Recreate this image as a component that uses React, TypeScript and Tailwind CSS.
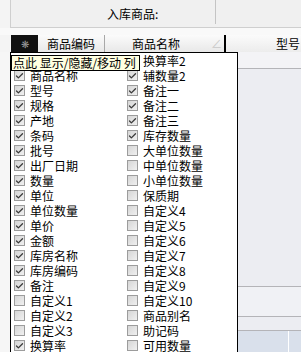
import { Check } from "lucide-react";

type Item = { label: string; checked: boolean };

const leftItems: Item[] = [
  { label: "商品编码", checked: true },
  { label: "商品名称", checked: true },
  { label: "型号", checked: true },
  { label: "规格", checked: true },
  { label: "产地", checked: true },
  { label: "条码", checked: true },
  { label: "批号", checked: true },
  { label: "出厂日期", checked: true },
  { label: "数量", checked: true },
  { label: "单位", checked: true },
  { label: "单位数量", checked: true },
  { label: "单价", checked: true },
  { label: "金额", checked: true },
  { label: "库房名称", checked: true },
  { label: "库房编码", checked: true },
  { label: "备注", checked: true },
  { label: "自定义1", checked: false },
  { label: "自定义2", checked: false },
  { label: "自定义3", checked: false },
  { label: "换算率", checked: true },
];

const rightItems: Item[] = [
  { label: "换算率2", checked: true },
  { label: "辅数量2", checked: true },
  { label: "备注一", checked: true },
  { label: "备注二", checked: true },
  { label: "备注三", checked: true },
  { label: "库存数量", checked: true },
  { label: "大单位数量", checked: false },
  { label: "中单位数量", checked: false },
  { label: "小单位数量", checked: false },
  { label: "保质期", checked: false },
  { label: "自定义4", checked: false },
  { label: "自定义5", checked: false },
  { label: "自定义6", checked: false },
  { label: "自定义7", checked: false },
  { label: "自定义8", checked: false },
  { label: "自定义9", checked: false },
  { label: "自定义10", checked: false },
  { label: "商品别名", checked: false },
  { label: "助记码", checked: false },
  { label: "可用数量", checked: false },
];

function Box({ checked }: { checked: boolean }) {
  return (
    <span className="w-[11px] h-[11px] shrink-0 border border-[#9c9c9c] bg-gradient-to-br from-[#d6d6d6] to-[#f0f0f0] flex items-center justify-center">
      {checked && <Check size={10} strokeWidth={3.5} className="text-[#3a3a3a]" />}
    </span>
  );
}

function Row({ item }: { item: Item }) {
  return (
    <div className="h-[15px] flex items-center gap-[5px] pl-[3px] whitespace-nowrap">
      <Box checked={item.checked} />
      <span className="leading-[15px]">{item.label}</span>
    </div>
  );
}

export default function App() {
  return (
    <div
      className="w-[301px] h-[352px] overflow-hidden bg-[#f4f4f4] text-[12px] text-black flex flex-col"
      style={{ fontFamily: '"Noto Sans CJK SC", "Noto Sans", sans-serif' }}
    >
      {/* form strip */}
      <div className="h-[28px] ml-[10px] border-l border-b border-[#cfcfcf] bg-[#f0f0f0] flex items-start">
        <span className="ml-[96px] mt-[6px] leading-[15px]">入库商品:</span>
        <span className="ml-[57px] w-px h-[24px] bg-[#c4c4c4]" />
      </div>
      <div className="h-[7px] bg-[#f9f9f9]" />

      {/* grid header */}
      <div className="h-[17px] flex">
        <div className="w-[11px] bg-[#f4f4f4]" />
        <div className="w-[27px] bg-[#111] text-[#9a9a9a] text-[10px] flex items-center justify-center">❋</div>
        <div className="w-[67px] border-r border-[#a8a8a8] bg-gradient-to-b from-[#fbfbfb] to-[#e8e8e8] flex items-center justify-center">
          商品编码
        </div>
        <div className="w-[119px] bg-gradient-to-b from-[#fbfbfb] to-[#e8e8e8] flex items-center pl-[27px]">
          <span>商品名称</span>
          <span className="ml-[31px] text-[#c8c8c8] text-[11px]">∠</span>
        </div>
        <div className="w-[2px] bg-black" />
        <div className="flex-1 bg-gradient-to-b from-[#fbfbfb] to-[#ececec] flex items-center justify-end pr-[1px]">
          型号
        </div>
      </div>

      {/* body */}
      <div className="flex-1 flex min-h-0">
        <div className="w-[10px] bg-[#f6f6f6]" />
        <div className="w-[228px] border-x border-t border-black bg-white relative overflow-hidden">
          <div className="grid grid-cols-[113px_1fr]">
            <div className="flex flex-col">
              {leftItems.map((it) => (
                <Row key={it.label} item={it} />
              ))}
            </div>
            <div className="flex flex-col">
              {rightItems.map((it) => (
                <Row key={it.label} item={it} />
              ))}
            </div>
          </div>
          <div className="absolute left-0 top-[2px] h-[16px] w-[129px] bg-[#ffffe1] border border-black flex items-center pl-[1px] whitespace-nowrap leading-[14px]">
            点此&nbsp;显示/隐藏/移动&nbsp;列
          </div>
        </div>
        <div className="flex-1 bg-[#ecedf2] flex flex-col">
          <div className="h-[17px] bg-[#f3f3f6] border-b border-[#b4b4b8]" />
          <div className="h-[218px] border-b border-[#b4b4b8]" />
          <div className="h-[30px] bg-[#f0f1f5] border-b border-[#b4b4b8]" />
          <div className="h-[14px] border-b border-[#b4b4b8]" />
          <div className="flex-1 bg-[#d9e0eb] flex">
            <div className="w-[50px]" />
            <div className="w-px bg-white" />
          </div>
        </div>
      </div>
    </div>
  );
}
